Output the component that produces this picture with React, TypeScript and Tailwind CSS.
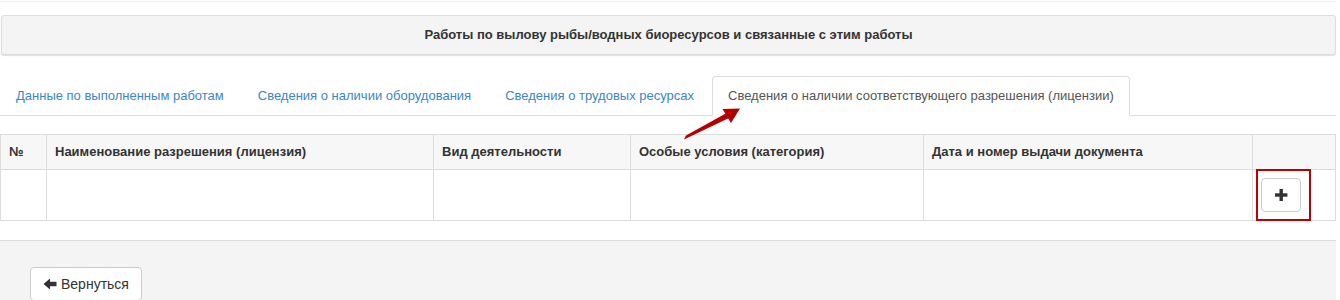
import React from "react";

const tabs = [
  "Данные по выполненным работам",
  "Сведения о наличии оборудования",
  "Сведения о трудовых ресурсах",
  "Сведения о наличии соответствующего разрешения (лицензии)",
];

const cols = [
  { label: "№", w: "w-[46px]" },
  { label: "Наименование разрешения (лицензия)", w: "w-[387px]" },
  { label: "Вид деятельности", w: "w-[197px]" },
  { label: "Особые условия (категория)", w: "w-[293px]" },
  { label: "Дата и номер выдачи документа", w: "w-[329px]" },
  { label: "", w: "w-[83px]" },
];

function PlusIcon() {
  return (
    <svg width="14" height="14" viewBox="0 0 14 14" className="block">
      <rect x="5.5" y="1" width="3.4" height="12" fill="#333" />
      <rect x="1" y="5.3" width="12.4" height="3.4" fill="#333" />
    </svg>
  );
}

function ArrowLeftIcon() {
  return (
    <svg width="14" height="14" viewBox="0 0 14 14" className="block">
      <polygon points="0.5,7 7,1.5 7,4.8 13.5,4.8 13.5,9.2 7,9.2 7,12.5" fill="#333" />
    </svg>
  );
}

export default function App() {
  return (
    <div className="relative w-[1340px] h-[300px] overflow-hidden bg-white font-['Liberation_Sans',Arial,sans-serif] text-[13px] text-[#333]">
      <div className="w-[1336px]">
        <div className="h-[2px] border-b border-[#eee] bg-white" />
        <div className="pt-[13px]">
          <div className="ml-px h-[40px] flex items-center justify-center rounded-[3px] border border-[#ddd] bg-[#f4f4f4] shadow-[0_1px_1px_rgba(0,0,0,0.12)] font-bold leading-[18px]">
            Работы по вылову рыбы/водных биоресурсов и связанные с этим работы
          </div>
        </div>

        <ul className="mt-[21px] flex border-b border-[#ddd] leading-[18px]">
          {tabs.map((t, i) => {
            const active = i === tabs.length - 1;
            return (
              <li key={t} className="mr-[2px] -mb-px">
                <div
                  className={
                    active
                      ? "block px-[15px] py-[10px] rounded-t-[4px] border border-[#ddd] border-b-transparent bg-white text-[#555]"
                      : "block px-[15px] py-[10px] rounded-t-[4px] border border-transparent text-[#3a87c8]"
                  }
                >
                  {t}
                </div>
              </li>
            );
          })}
        </ul>

        <table className="mt-[18px] w-[1336px] table-fixed border-collapse border border-[#ddd] leading-[18px]">
          <colgroup>
            {cols.map((c, i) => (
              <col key={i} className={c.w} />
            ))}
          </colgroup>
          <thead>
            <tr className="bg-[#f7f7f7]">
              {cols.map((c, i) => (
                <th
                  key={i}
                  className="h-[35px] border border-[#ddd] px-[8px] py-[8px] text-left font-bold align-middle"
                >
                  {c.label}
                </th>
              ))}
            </tr>
          </thead>
          <tbody>
            <tr>
              {cols.map((c, i) => (
                <td key={i} className="h-[51px] border border-[#ddd] p-[8px] align-top">
                  {i === cols.length - 1 ? (
                    <div className="relative">
                      <button className="flex h-[34px] w-[40px] items-center justify-center rounded-[4px] border border-[#ccc] bg-white">
                        <PlusIcon />
                      </button>
                      <div className="pointer-events-none absolute left-[-5px] top-[-9px] h-[52px] w-[55px] border-2 border-[#c00000]" />
                    </div>
                  ) : null}
                </td>
              ))}
            </tr>
          </tbody>
        </table>

        <div className="mt-[19px] h-[80px] border-t border-[#ddd] bg-[#f4f4f4] pl-[30px] pt-[26px]">
          <button className="flex h-[34px] items-center gap-[4px] rounded-[4px] border border-[#ccc] bg-white px-[12px] text-[14px] leading-[20px] text-[#333]">
            <ArrowLeftIcon />
            <span>Вернуться</span>
          </button>
        </div>
      </div>

      <svg
        className="pointer-events-none absolute left-0 top-0"
        width="1340"
        height="300"
        viewBox="0 0 1340 300"
      >
        <polygon points="684,139.5 686,135.5 727.5,112.5 729,118" fill="#b50000" />
        <polygon points="740,108.5 731,123 722.5,109" fill="#b50000" />
      </svg>
    </div>
  );
}
